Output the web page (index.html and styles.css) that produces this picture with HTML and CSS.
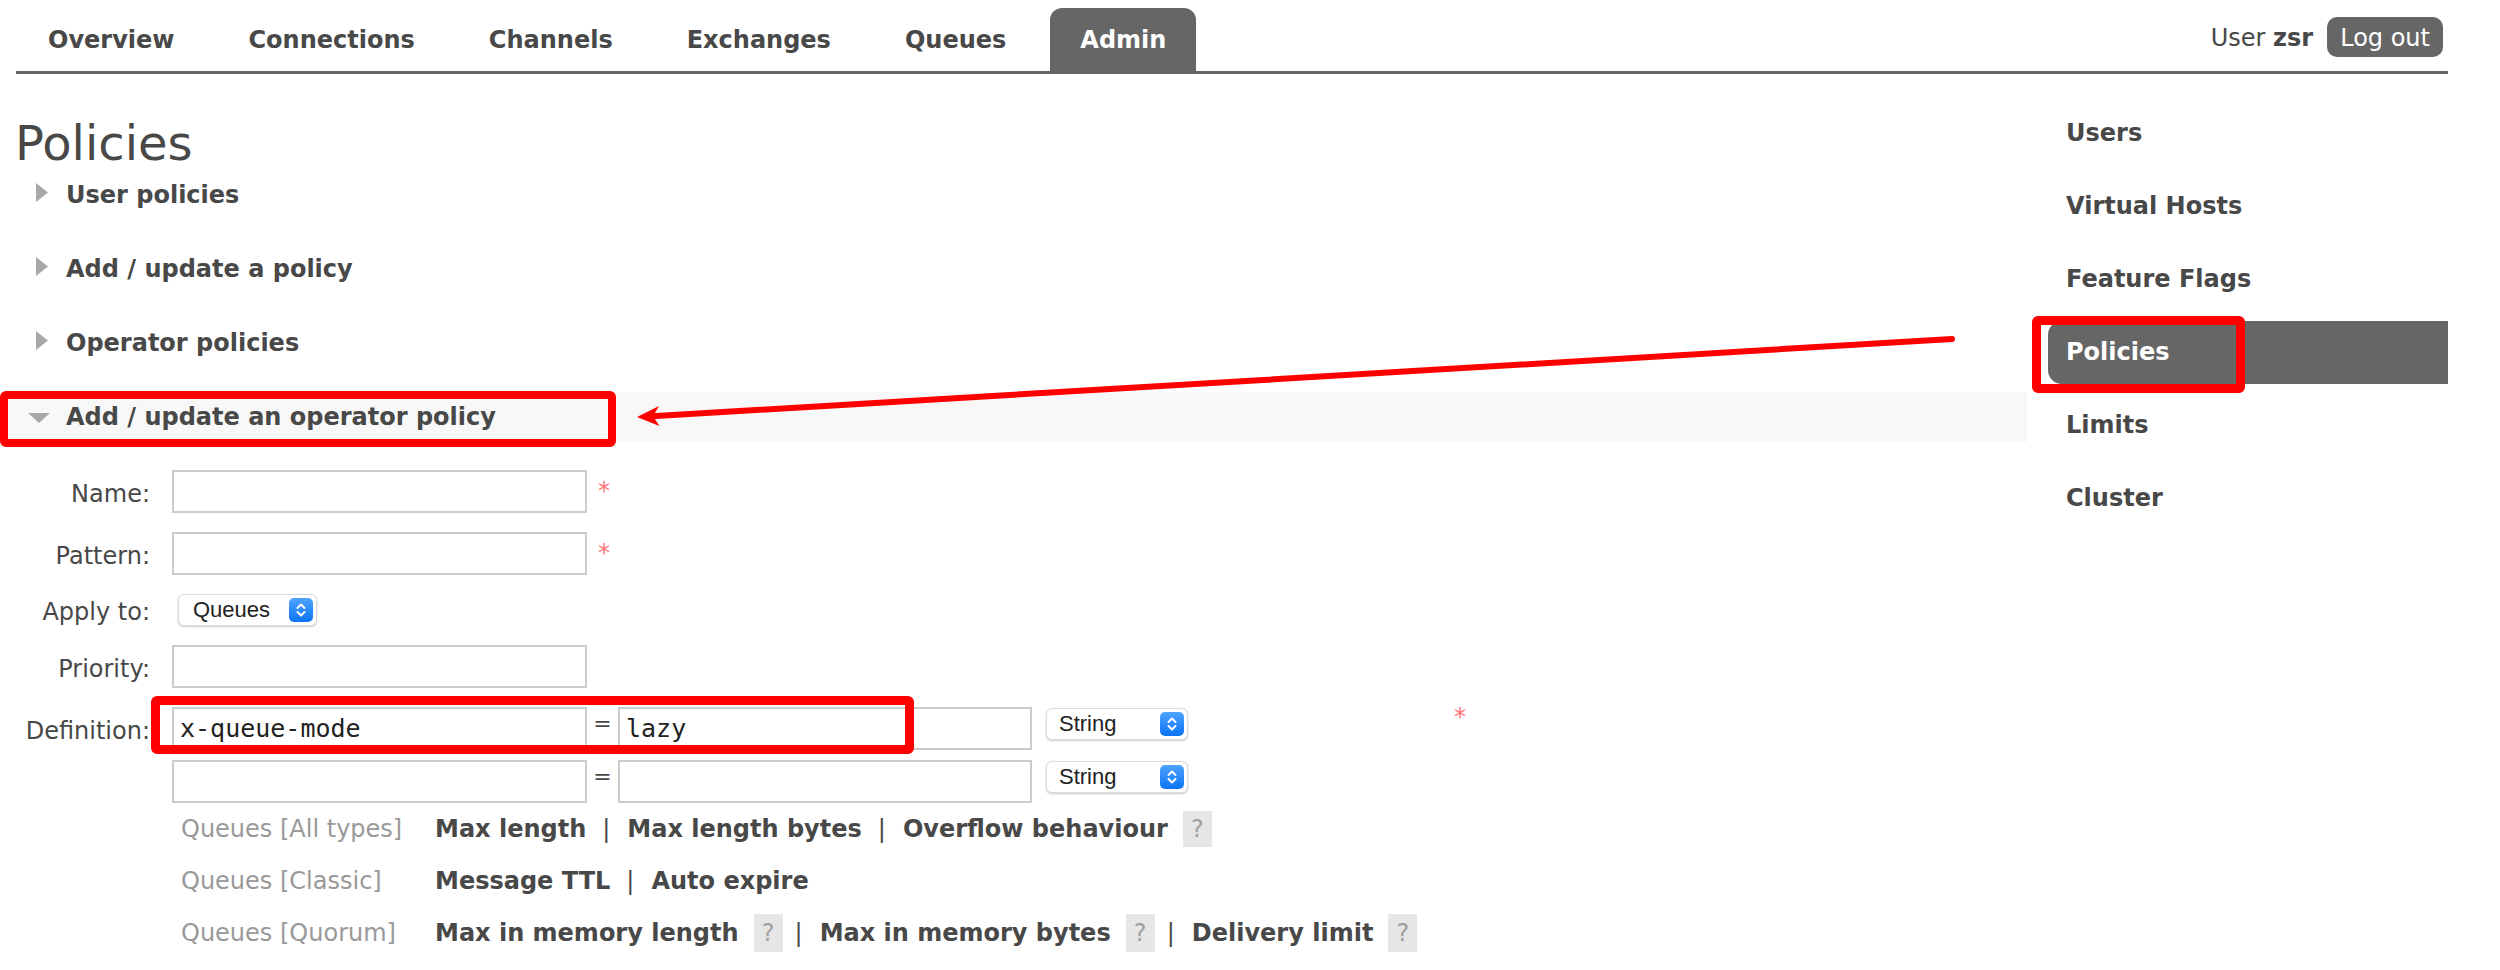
FILE: index.html
```html
<!DOCTYPE html>
<html lang="en">
<head>
<meta charset="utf-8">
<title>RabbitMQ Management - Policies</title>
<link rel="stylesheet" href="styles.css">
</head>
<body>
<div class="page">
  <header class="topbar">
    <nav>
      <ul class="menu">
        <li><a href="#">Overview</a></li>
        <li><a href="#">Connections</a></li>
        <li><a href="#">Channels</a></li>
        <li><a href="#">Exchanges</a></li>
        <li><a href="#">Queues</a></li>
        <li><a href="#" class="selected">Admin</a></li>
      </ul>
    </nav>
    <div class="login">
      <span class="user">User <b>zsr</b></span>
      <button class="logout" type="button">Log out</button>
    </div>
  </header>

  <div class="main">
    <div class="content">
      <h1>Policies</h1>

      <div class="section">
        <h2 class="sec-head"><svg class="tri" viewBox="0 0 24 24"><polygon points="8,0 20,9.5 8,19" /></svg>User policies</h2>
      </div>
      <div class="section">
        <h2 class="sec-head"><svg class="tri" viewBox="0 0 24 24"><polygon points="8,0 20,9.5 8,19" /></svg>Add / update a policy</h2>
      </div>
      <div class="section">
        <h2 class="sec-head"><svg class="tri" viewBox="0 0 24 24"><polygon points="8,0 20,9.5 8,19" /></svg>Operator policies</h2>
      </div>
      <div class="section open">
        <h2 class="sec-head hl"><svg class="tri" viewBox="0 0 24 24"><polygon points="0,8 22,8 11,18" /></svg>Add / update an operator policy</h2>

        <form class="form">
          <div class="row">
            <label>Name:</label>
            <input class="text" type="text">
            <span class="mand">*</span>
          </div>
          <div class="row">
            <label>Pattern:</label>
            <input class="text" type="text">
            <span class="mand">*</span>
          </div>
          <div class="row">
            <label>Apply to:</label>
            <div class="select apply">
              <span>Queues</span>
              <span class="stepper"><svg viewBox="0 0 24 24"><path d="M8.5 10 L12 6.5 L15.5 10 M8.5 14 L12 17.5 L15.5 14" /></svg></span>
            </div>
          </div>
          <div class="row">
            <label>Priority:</label>
            <input class="text" type="text">
          </div>
          <div class="row def">
            <label>Definition:</label>
            <div class="multi">
              <div class="mrow">
                <input class="text" type="text" value="x-queue-mode">
                <span class="eq">=</span>
                <input class="text val" type="text" value="lazy">
                <div class="select type">
                  <span>String</span>
                  <span class="stepper"><svg viewBox="0 0 24 24"><path d="M8.5 10 L12 6.5 L15.5 10 M8.5 14 L12 17.5 L15.5 14" /></svg></span>
                </div>
              </div>
              <div class="mrow">
                <input class="text" type="text">
                <span class="eq">=</span>
                <input class="text val" type="text">
                <div class="select type">
                  <span>String</span>
                  <span class="stepper"><svg viewBox="0 0 24 24"><path d="M8.5 10 L12 6.5 L15.5 10 M8.5 14 L12 17.5 L15.5 14" /></svg></span>
                </div>
              </div>
              <div class="help">
                <div class="hrow">
                  <span class="hlabel">Queues [All types]</span>
                  <span class="hlinks">
                    <span class="link">Max length</span><span class="sep">|</span><span class="link">Max length bytes</span><span class="sep">|</span><span class="link">Overflow behaviour</span><span class="q">?</span>
                  </span>
                </div>
                <div class="hrow">
                  <span class="hlabel">Queues [Classic]</span>
                  <span class="hlinks">
                    <span class="link">Message TTL</span><span class="sep">|</span><span class="link">Auto expire</span>
                  </span>
                </div>
                <div class="hrow">
                  <span class="hlabel">Queues [Quorum]</span>
                  <span class="hlinks">
                    <span class="link">Max in memory length</span><span class="q tall">?</span><span class="sep after-q">|</span><span class="link">Max in memory bytes</span><span class="q tall">?</span><span class="sep after-q">|</span><span class="link">Delivery limit</span><span class="q tall">?</span>
                  </span>
                </div>
              </div>
            </div>
            <span class="mand">*</span>
          </div>
        </form>
      </div>
    </div>

    <aside class="sidebar">
      <ul>
        <li>Users</li>
        <li>Virtual Hosts</li>
        <li>Feature Flags</li>
        <li class="selected">Policies</li>
        <li>Limits</li>
        <li>Cluster</li>
      </ul>
    </aside>
  </div>

  <div class="annot annot-sec"></div>
  <div class="annot annot-def"></div>
  <div class="annot annot-side"></div>
  <svg class="arrow" viewBox="0 0 2500 970">
    <line x1="1952" y1="339" x2="652" y2="416.2" />
    <polygon points="637,417 659,406 653,416.3 659.5,426" />
  </svg>
</div>
</body>
</html>
```

FILE: styles.css
```css
* { box-sizing: border-box; }

html, body {
  margin: 0;
  padding: 0;
  background: #fff;
}

body {
  font-family: "DejaVu Sans", Verdana, sans-serif;
  font-size: 24px;
  color: #484848;
}

.page {
  position: relative;
  padding: 0 52px 0 16px;
  height: 970px;
  overflow: hidden;
}

/* ---------- header ---------- */
.topbar {
  display: flex;
  justify-content: space-between;
  align-items: flex-start;
  height: 74px;
  border-bottom: 3px solid #666;
}

.menu {
  list-style: none;
  margin: 8px 0 0 2px;
  padding: 0;
  display: flex;
  gap: 14px;
}

.menu a {
  display: block;
  padding: 18px 30px 17px;
  line-height: 28px;
  font-weight: bold;
  color: #484848;
  text-decoration: none;
  border-radius: 12px 12px 0 0;
}

.menu a.selected {
  background: #666;
  color: #fff;
}

.login {
  display: flex;
  align-items: center;
  gap: 14px;
  margin: 16px 5px 0 0;
}

.user { line-height: 40px; padding-top: 2px; }

.logout {
  height: 40px;
  padding: 2px 13px 0;
  border: none;
  border-radius: 10px;
  background: #666;
  color: #fff;
  font-family: inherit;
  font-size: 24px;
  line-height: 38px;
}

/* ---------- layout ---------- */
.main {
  display: flex;
}

.content {
  flex: 1;
  min-width: 0;
}

h1 {
  margin: 42px 0 0 -1px;
  font-size: 48px;
  font-weight: normal;
  line-height: 54px;
  color: #484848;
}

.sec-head {
  display: flex;
  align-items: center;
  height: 50px;
  margin: 0 0 24px -8px;
  padding-left: 20px;
  font-size: 24px;
  font-weight: bold;
  line-height: 50px;
  color: #484848;
}

.section.open .sec-head { margin-bottom: 0; }

.sec-head.hl { background: #f8f8f8; }

.tri {
  width: 24px;
  height: 24px;
  flex: none;
  margin-right: 14px;
  fill: #a8a8a8;
}

/* ---------- form ---------- */
.form {
  display: flex;
  flex-direction: column;
  gap: 19px;
  padding-top: 28px;
}

.row {
  display: flex;
  align-items: center;
}

.row label {
  flex: none;
  width: 134px;
  margin-right: 22px;
  padding-top: 4px;
  text-align: right;
  line-height: 28px;
}

.text {
  flex: none;
  width: 415px;
  height: 43px;
  margin: 0;
  padding: 0 6px;
  border: 2px solid #ccc;
  border-radius: 0;
  background: #fff;
  font-family: "DejaVu Sans Mono", monospace;
  font-size: 25px;
  color: #222;
  outline: none;
}

.text.val { width: 414px; }

.mand {
  color: #f77;
  margin-left: 11px;
  padding-bottom: 2px;
  line-height: 28px;
}

.select {
  flex: none;
  display: flex;
  align-items: center;
  justify-content: space-between;
  height: 32px;
  padding: 0 3px 0 14px;
  border: 1px solid #dcdcdc;
  border-radius: 6px;
  background: #fff;
  box-shadow: 0 1px 2px rgba(0, 0, 0, 0.22);
  font-family: "Liberation Sans", Arial, sans-serif;
  font-size: 22px;
  color: #222;
}

.select.apply {
  width: 139px;
  margin-left: 6px;
}

.select.type {
  width: 142px;
  margin: 1px 0 0 14px;
  padding-left: 12px;
}

.stepper {
  display: flex;
  align-items: center;
  justify-content: center;
  width: 24px;
  height: 24px;
  border-radius: 5px;
  background: linear-gradient(#4ea4ff, #0b74f4);
}

.stepper svg {
  width: 24px;
  height: 24px;
  fill: none;
  stroke: #fff;
  stroke-width: 2;
  stroke-linecap: round;
  stroke-linejoin: round;
}

.row.def { align-items: flex-start; }

.row.def label { padding-top: 10px; }

.multi {
  flex: none;
  width: 1270px;
}

.mrow {
  display: flex;
  align-items: flex-start;
  margin-bottom: 10px;
}

.mrow + .mrow { margin-bottom: 0; }

.eq {
  flex: none;
  width: 31px;
  padding-top: 3px;
  text-align: center;
  font-size: 22px;
  line-height: 28px;
  color: #484848;
}

.row.def .mand {
  margin: -4px 0 0 12px;
  padding: 0;
}

.hrow {
  display: flex;
  align-items: center;
  height: 52px;
  padding-left: 9px;
}

.hlabel {
  flex: none;
  width: 254px;
  color: #999;
}

.hlinks {
  display: flex;
  align-items: center;
}

.link { font-weight: bold; }

.sep {
  margin: 0 17px 0 16px;
  color: #484848;
}

.sep.after-q { margin-left: 12px; }

.q {
  display: inline-block;
  width: 29px;
  height: 36px;
  margin-left: 15px;
  background: #e6e6e6;
  color: #a0a0a0;
  text-align: center;
  line-height: 36px;
}

.q.tall {
  height: 38px;
  line-height: 38px;
}

/* ---------- sidebar ---------- */
.sidebar {
  flex: none;
  width: 400px;
  margin-left: 21px;
  padding-top: 28px;
}

.sidebar ul {
  list-style: none;
  margin: 0;
  padding: 0;
}

.sidebar li {
  height: 63px;
  margin-bottom: 10px;
  padding-left: 18px;
  border-radius: 14px 0 0 14px;
  font-weight: bold;
  line-height: 63px;
  color: #484848;
}

.sidebar li.selected {
  background: #666;
  color: #fff;
}

/* ---------- annotations (overlay) ---------- */
.annot {
  position: absolute;
  border: 8px solid #f00;
  border-radius: 6px;
  pointer-events: none;
}

.annot-sec {
  left: 0;
  top: 391px;
  width: 616px;
  height: 56px;
}

.annot-def {
  left: 151px;
  top: 696px;
  width: 763px;
  height: 58px;
  border-width: 9px;
}

.annot-side {
  left: 2032px;
  top: 316px;
  width: 213px;
  height: 77px;
  border-width: 9px;
}

.arrow {
  position: absolute;
  left: 0;
  top: 0;
  width: 2500px;
  height: 970px;
  pointer-events: none;
}

.arrow line {
  stroke: #f00;
  stroke-width: 6;
  stroke-linecap: round;
}

.arrow polygon { fill: #f00; }
```
